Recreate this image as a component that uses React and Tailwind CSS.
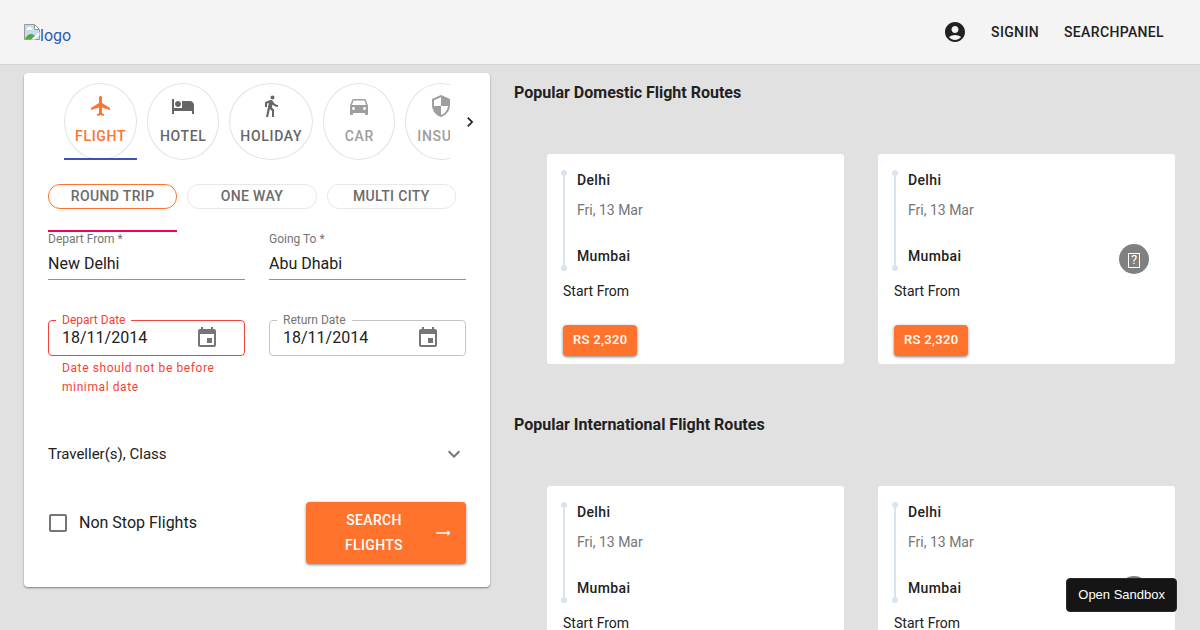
import React, { useState } from "react";
import {
  MdAccountCircle,
  MdChevronRight,
  MdDirectionsCar,
  MdDirectionsWalk,
  MdEvent,
  MdExpandMore,
  MdFlight,
  MdHotel,
  MdSecurity,
  MdTrendingFlat,
} from "react-icons/md";
import clsx from "clsx";

const services = [
  { name: "Flight", Icon: MdFlight },
  { name: "Hotel", Icon: MdHotel },
  { name: "Holiday", Icon: MdDirectionsWalk },
  { name: "Car", Icon: MdDirectionsCar, disabled: true },
  { name: "Insu...", Icon: MdSecurity, disabled: true },
];

const tripTypes = ["Round Trip", "One Way", "Multi City"];

const routes = [
  { id: 1, from: "Delhi", to: "Mumbai", date: "Fri, 13 Mar", price: "RS 2,320" },
  { id: 2, from: "Delhi", to: "Mumbai", date: "Fri, 13 Mar", price: "RS 2,320" },
];

const Logo = () => (
  <a href="#" className="flex items-start pt-2 text-[#2f5bb0]">
    <svg width="16" height="16" viewBox="0 0 16 16" aria-hidden="true">
      <path d="M.5.5h10l5 5v10H.5z" fill="#c3dcf0" stroke="#9a9a9a" />
      <path d="M3 6a1.5 1.5 0 0 1 1-2.5 2 2 0 0 1 3.5.5A1.2 1.2 0 0 1 8 6z" fill="#fff" />
      <path d="M1 15c1-3 4-5 6-5 2 0 3 1 4 2l-3 3z" fill="#54a838" />
      <path d="M7 15.5 15.5 8v3L11 15.5z" fill="#fff" />
      <path d="M10.5.5v5h5z" fill="#fff" stroke="#9a9a9a" />
    </svg>
    <span className="leading-6">logo</span>
  </a>
);

const Header = () => (
  <header className="border-b border-[#d4d4d4] bg-[#f4f4f4]">
    <div className="flex h-16 items-center justify-between pl-6 pr-9">
      <Logo />
      <nav className="flex items-center text-sm font-medium uppercase tracking-wide">
        <button type="button" aria-label="Account" className="mr-6">
          <MdAccountCircle className="size-6" />
        </button>
        <a href="#signin" className="mr-[25px]">
          Signin
        </a>
        <a href="#searchpanel">Searchpanel</a>
      </nav>
    </div>
  </header>
);

const ServiceTabs = () => {
  const [active, setActive] = useState("Flight");

  return (
    <div className="flex items-center pl-10">
      <div className="flex min-w-0 flex-1 gap-2.5 overflow-hidden" role="tablist">
        {services.map(({ name, Icon, disabled }) => (
          <div key={name} className="relative shrink-0">
            <button
              type="button"
              role="tab"
              aria-selected={active === name}
              disabled={disabled}
              onClick={() => setActive(name)}
              className={clsx(
                "flex min-w-[72px] flex-col items-center gap-1.5 rounded-[50%] border border-[#e2e2e2] px-2.5 pt-2.5 pb-[11px] text-sm font-medium uppercase leading-6 tracking-wider",
                active === name && "text-[#ff732d]",
                active !== name && !disabled && "text-[#666666]",
                disabled && "text-[#9e9e9e]"
              )}
            >
              <Icon className="size-6" />
              {name}
            </button>
            {active === name && (
              <span className="absolute inset-x-0 bottom-0 h-0.5 bg-[#3f51b5]" />
            )}
          </div>
        ))}
      </div>
      <button
        type="button"
        aria-label="Next services"
        className="flex w-10 shrink-0 justify-center"
      >
        <MdChevronRight className="size-5" />
      </button>
    </div>
  );
};

const TripTabs = () => {
  const [trip, setTrip] = useState("Round Trip");

  return (
    <div className="flex gap-2.5 pr-2.5" role="tablist">
      {tripTypes.map((name) => (
        <div
          key={name}
          className={clsx(
            "flex-1 border-b-2 pb-[21px]",
            trip === name ? "border-[#f50057]" : "border-transparent"
          )}
        >
          <button
            type="button"
            role="tab"
            aria-selected={trip === name}
            onClick={() => setTrip(name)}
            className={clsx(
              "block h-[25px] w-full rounded-xl border pb-0.5 text-sm font-medium uppercase leading-5 tracking-wide text-[#6b6b6b]",
              trip === name ? "border-[#ff732d]" : "border-[#e8e8e8]"
            )}
          >
            {name}
          </button>
        </div>
      ))}
    </div>
  );
};

const CityField = ({ id, label, value }) => (
  <div className="flex min-w-0 flex-col">
    <label htmlFor={id} className="text-xs leading-[15px] text-[#757575]">
      {label} *
    </label>
    <input
      id={id}
      type="text"
      required
      defaultValue={value}
      className="h-[33px] w-full border-b border-[#949494] outline-none"
    />
  </div>
);

const DateField = ({ id, label, value, error }) => (
  <div className="min-w-0">
    <div
      className={clsx(
        "relative flex h-9 items-center rounded border px-[13px]",
        error ? "border-[#f44336]" : "border-[#c4c4c4]"
      )}
    >
      <label
        htmlFor={id}
        className={clsx(
          "absolute -top-2 left-[7px] bg-white px-1.5 text-xs leading-[15px]",
          error ? "text-[#f44336]" : "text-[#757575]"
        )}
      >
        {label}
      </label>
      <input
        id={id}
        type="text"
        defaultValue={value}
        aria-invalid={Boolean(error)}
        className="w-full min-w-0 flex-1 outline-none"
      />
      <button
        type="button"
        aria-label="change date"
        className="flex w-12 justify-center text-[#757575]"
      >
        <MdEvent className="size-6" />
      </button>
    </div>
    {error && (
      <p className="mx-3.5 mt-[3px] text-xs leading-[19px] tracking-wider text-[#f44336]">
        {error}
      </p>
    )}
  </div>
);

const SearchPanel = () => (
  <form
    className="rounded bg-white pt-2.5 pb-[23px] shadow-[0_1px_2px_rgba(0,0,0,0.45)]"
    onSubmit={(e) => e.preventDefault()}
  >
    <ServiceTabs />
    <div className="px-6 pt-6">
      <TripTabs />
      <div className="grid grid-cols-2 gap-x-6">
        <CityField id="depart-from" label="Depart From" value="New Delhi" />
        <CityField id="going-to" label="Going To" value="Abu Dhabi" />
      </div>
      <div className="mt-10 grid grid-cols-2 gap-x-6">
        <DateField
          id="depart-date"
          label="Depart Date"
          value="18/11/2014"
          error="Date should not be before minimal date"
        />
        <DateField id="return-date" label="Return Date" value="18/11/2014" />
      </div>
      <button
        type="button"
        aria-expanded="false"
        className="mt-[33px] flex h-12 w-full items-center justify-between text-[15px]"
      >
        Traveller(s), Class
        <MdExpandMore className="size-6 text-[#757575]" />
      </button>
      <div className="mt-6 flex items-start justify-between">
        <label className="mt-[9px] flex items-center gap-3">
          <input
            type="checkbox"
            className="ml-px size-[18px] appearance-none rounded-xs border-2 border-[#757575] checked:bg-[#ff732d]"
          />
          Non Stop Flights
        </label>
        <button
          type="submit"
          className="flex w-40 items-center rounded bg-[#ff732d] py-1.5 pr-3.5 pl-2 text-sm font-medium uppercase leading-[25px] tracking-wide text-white shadow-[0_1px_3px_rgba(0,0,0,0.45)]"
        >
          <span className="flex-1 px-5 text-center">Search Flights</span>
          <MdTrendingFlat className="size-[18px] shrink-0" />
        </button>
      </div>
    </div>
  </form>
);

const RouteCard = ({ route }) => (
  <article className="rounded-[3px] bg-white px-4 pt-4 pb-2 text-sm">
    <div className="flex">
      {/* Timeline */}
      <div className="-ml-0.5 flex w-1.5 flex-col items-center">
        <span className="size-1.5 rounded-full bg-[#dae3f0]" />
        <span className="w-0.5 flex-1 bg-[#dae3f0]" />
        <span className="size-1.5 rounded-full bg-[#dae3f0]" />
      </div>
      <div className="ml-2.5 pb-[5px]">
        <h3 className="font-medium tracking-wide">{route.from}</h3>
        <p className="mt-2.5 text-[#757575]">{route.date}</p>
        <h3 className="mt-[26px] font-medium tracking-wide">{route.to}</h3>
      </div>
    </div>
    <p className="mt-2.5">Start From</p>
    <button
      type="button"
      className="mt-6 block h-[31px] rounded bg-[#ff732d] px-2.5 text-[13px] font-medium tracking-wide text-white shadow-[0_1px_3px_rgba(0,0,0,0.5)]"
    >
      {route.price}
    </button>
  </article>
);

const RouteSection = ({ title }) => (
  <section>
    <h2 className="font-bold leading-6">{title}</h2>
    <div className="relative mt-[49px]">
      <div className="grid grid-cols-2 gap-x-[34px] pr-px pl-[33px]">
        {routes.map((route) => (
          <RouteCard key={route.id} route={route} />
        ))}
      </div>
      <button
        type="button"
        aria-label="Next routes"
        className="absolute top-1/2 right-[27px] flex size-[30px] -translate-y-1/2 items-center justify-center rounded-full bg-[#808080] pt-0.5 text-white"
      >
        <span className="flex h-[15px] w-3 items-center justify-center border border-white text-[13px] leading-3">
          ?
        </span>
      </button>
    </div>
  </section>
);

const App = () => {
  return (
    <div className="min-h-screen bg-[#e1e1e1] font-['Roboto',sans-serif] text-[#212121]">
      <Header />
      <main className="grid grid-cols-12 items-start gap-6 px-6 pt-2 pb-12">
        <div className="col-span-5">
          <SearchPanel />
        </div>
        <div className="col-span-7 flex flex-col gap-[49px] pt-2">
          <RouteSection title="Popular Domestic Flight Routes" />
          <RouteSection title="Popular International Flight Routes" />
        </div>
      </main>

      <button
        type="button"
        className="fixed right-[23px] bottom-[18px] h-[34px] rounded border border-[#2a2a2a] bg-[#151515] px-[11px] font-['Liberation_Sans',sans-serif] text-[13px] text-white"
      >
        Open Sandbox
      </button>
    </div>
  );
};

export default App;
